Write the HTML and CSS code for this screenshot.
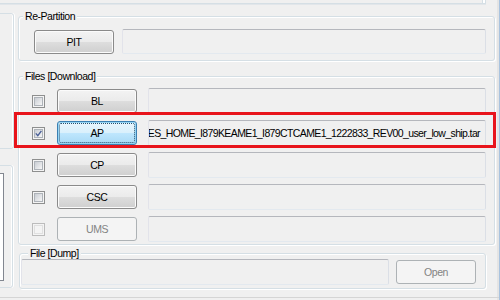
FILE: index.html
```html
<!DOCTYPE html>
<html>
<head>
<meta charset="utf-8">
<title>Odin</title>
<link rel="stylesheet" href="styles.css">
</head>
<body>
<div class="window">
  <div class="topstrip"></div>
  <div class="content">
    <div class="side">
      <div class="sidebox sidebox-a"></div>
      <div class="sidebox sidebox-b"><div class="sidelist"></div></div>
    </div>
    <div class="main">
      <fieldset class="group group-repart">
        <legend>Re-Partition</legend>
        <div class="inner inner-repart">
          <button class="btn">PIT</button>
          <div class="field field-repart"></div>
        </div>
      </fieldset>
      <fieldset class="group group-files">
        <legend>Files [Download]</legend>
        <div class="inner inner-files">
          <div class="row">
            <span class="cb"><span class="cb-in"></span></span>
            <button class="btn">BL</button>
            <div class="field"></div>
          </div>
          <div class="row row-hl">
            <span class="cb"><span class="cb-in"><svg class="check" viewBox="0 0 7 7" width="7" height="7"><path d="M0.8 3.4 L2.8 5.6 L6.4 0.9" /></svg></span></span>
            <button class="btn btn-focus">AP</button>
            <div class="field field-value"><span class="value">ES_HOME_I879KEAME1_I879CTCAME1_1222833_REV00_user_low_ship.tar</span></div>
            <div class="highlight"></div>
          </div>
          <div class="row">
            <span class="cb"><span class="cb-in"></span></span>
            <button class="btn">CP</button>
            <div class="field"></div>
          </div>
          <div class="row">
            <span class="cb"><span class="cb-in"></span></span>
            <button class="btn">CSC</button>
            <div class="field"></div>
          </div>
          <div class="row">
            <span class="cb cb-disabled"><span class="cb-in"></span></span>
            <button class="btn btn-disabled">UMS</button>
            <div class="field"></div>
          </div>
        </div>
      </fieldset>
      <fieldset class="group group-dump">
        <legend>File [Dump]</legend>
        <div class="inner inner-dump">
          <div class="field field-dump"></div>
          <button class="btn btn-disabled">Open</button>
        </div>
      </fieldset>
    </div>
  </div>
  <div class="footer"></div>
</div>
</body>
</html>
```
FILE: styles.css
```css
* { box-sizing: border-box; }
html, body { margin: 0; padding: 0; }
body {
  width: 500px;
  height: 300px;
  overflow: hidden;
  background: #f0f0f0;
  font-family: "Liberation Sans", Arial, sans-serif;
  font-size: 10.5px;
  letter-spacing: -0.45px;
  color: #000;
}
.window {
  width: 500px;
  height: 300px;
  display: flex;
  flex-direction: column;
  border-right: 1px solid #a9c3df;
  box-shadow: inset -2px 0 #e4e4e4;
}
.topstrip {
  height: 4px;
  flex: none;
  margin-right: 13px;
  border-right: 1px solid #d5dfe5;
  border-bottom: 1px solid #d5dfe5;
  box-shadow: inset -2px 0 #fff, inset -3px 0 #d5dfe5, 0 1px #e2e6ea;
}
.content {
  flex: 1;
  display: flex;
  gap: 4px;
  min-height: 0;
}
.side {
  width: 14px;
  flex: none;
  display: flex;
  flex-direction: column;
}
.sidebox {
  margin-left: -5px;
  border: 1px solid #d5dfe5;
  border-radius: 3px;
  box-shadow: inset -1px 0 #fff, 1px 0 #fff;
  flex: none;
}
.sidebox-a { margin-top: 9px; height: 136px; width: 19px; }
.sidebox-b { margin-top: 16px; height: 123px; width: 18px; }
.sidelist {
  margin-top: 7px;
  height: 108px;
  width: 8px;
  border: 1px solid #828790;
  background: #fff;
}
.main {
  width: 477px;
  flex: none;
  display: flex;
  flex-direction: column;
}
.group {
  margin: 0;
  padding: 0;
  min-width: 0;
  border: 1px solid #d5dfe5;
  border-radius: 3px;
  box-shadow: inset 1px 1px #fff, 1px 1px #fff;
}
.group legend {
  padding: 0 2px;
  margin-left: 4px;
  height: 12px;
  line-height: 12px;
  background: #f0f0f0;
}
.group-repart { margin-top: 6px; }
.group-files { margin-top: 9px; }
.group-dump { margin: 2px 9px 0 1px; }
.group-dump legend { margin-left: 8px; }
.inner-repart {
  display: flex;
  align-items: center;
  gap: 8px;
  padding: 7px 8px 6px 15px;
}
.inner-files {
  display: flex;
  flex-direction: column;
  gap: 8px;
  padding: 7px 8px 3px 13px;
}
.inner-dump {
  display: flex;
  align-items: center;
  gap: 7px;
  padding: 0 9px 3px 1px;
  height: 29px;
}
.row {
  display: flex;
  align-items: center;
  height: 24px;
}
.row-hl { position: relative; }
.highlight {
  position: absolute;
  top: -9px;
  bottom: -3px;
  left: -18px;
  right: -10px;
  border: 3px solid #e8141b;
}
.btn {
  position: relative;
  flex: none;
  width: 80px;
  height: 24px;
  padding: 0;
  font: inherit;
  letter-spacing: inherit;
  color: #000;
  border: 1px solid #8a8a8a;
  border-radius: 3px;
  background: linear-gradient(#f3f3f3 0%, #ebebeb 48%, #dddddd 52%, #cfcfcf 100%);
  box-shadow: inset 0 0 0 1px #fbfbfb;
}
.row .btn { margin-left: 12px; margin-right: 11px; }
.btn-focus {
  border-color: #3c7fb1;
  background: linear-gradient(#eaf6fd 0%, #d9f0fc 48%, #bee6fd 52%, #a7d9f5 100%);
  box-shadow: inset 0 0 0 1px #94d4f3;
}
.btn-focus::after {
  content: "";
  position: absolute;
  inset: 1px;
  border: 1px dotted #26506f;
  border-radius: 2px;
}
.btn-disabled {
  color: #838383;
  border-color: #adb2b5;
  background: #f4f4f4;
  box-shadow: none;
}
.field {
  flex: 1;
  min-width: 0;
  height: 26px;
  border: 1px solid;
  border-color: #b5b7bd #dbdfe6 #e3e9ef #e2e3ea;
  border-radius: 2px;
  background: #f0f0f0;
}
.field-repart { height: 25px; }
.field-value {
  display: flex;
  align-items: center;
  justify-content: flex-end;
  overflow: hidden;
  padding-right: 5px;
  white-space: nowrap;
}
.value { flex: none; letter-spacing: -0.62px; }
.cb {
  flex: none;
  width: 13px;
  height: 13px;
  border: 1px solid #8e8f8f;
  background: #f4f4f4;
  padding: 1px;
}
.cb-in {
  display: block;
  width: 9px;
  height: 9px;
  border: 1px solid #aeb3b9;
  background: linear-gradient(135deg, #c9cdd3, #f6f6f6);
}
.check {
  display: block;
  fill: none;
  stroke: #4a5f97;
  stroke-width: 1.4;
}
.cb-disabled { border-color: #bcbcbc; }
.cb-disabled .cb-in { border-color: #e0e0e0; background: #f4f4f4; }
.footer {
  margin-top: auto;
  flex: none;
  height: 3px;
  border-top: 1px solid #d5d5d5;
}
```
